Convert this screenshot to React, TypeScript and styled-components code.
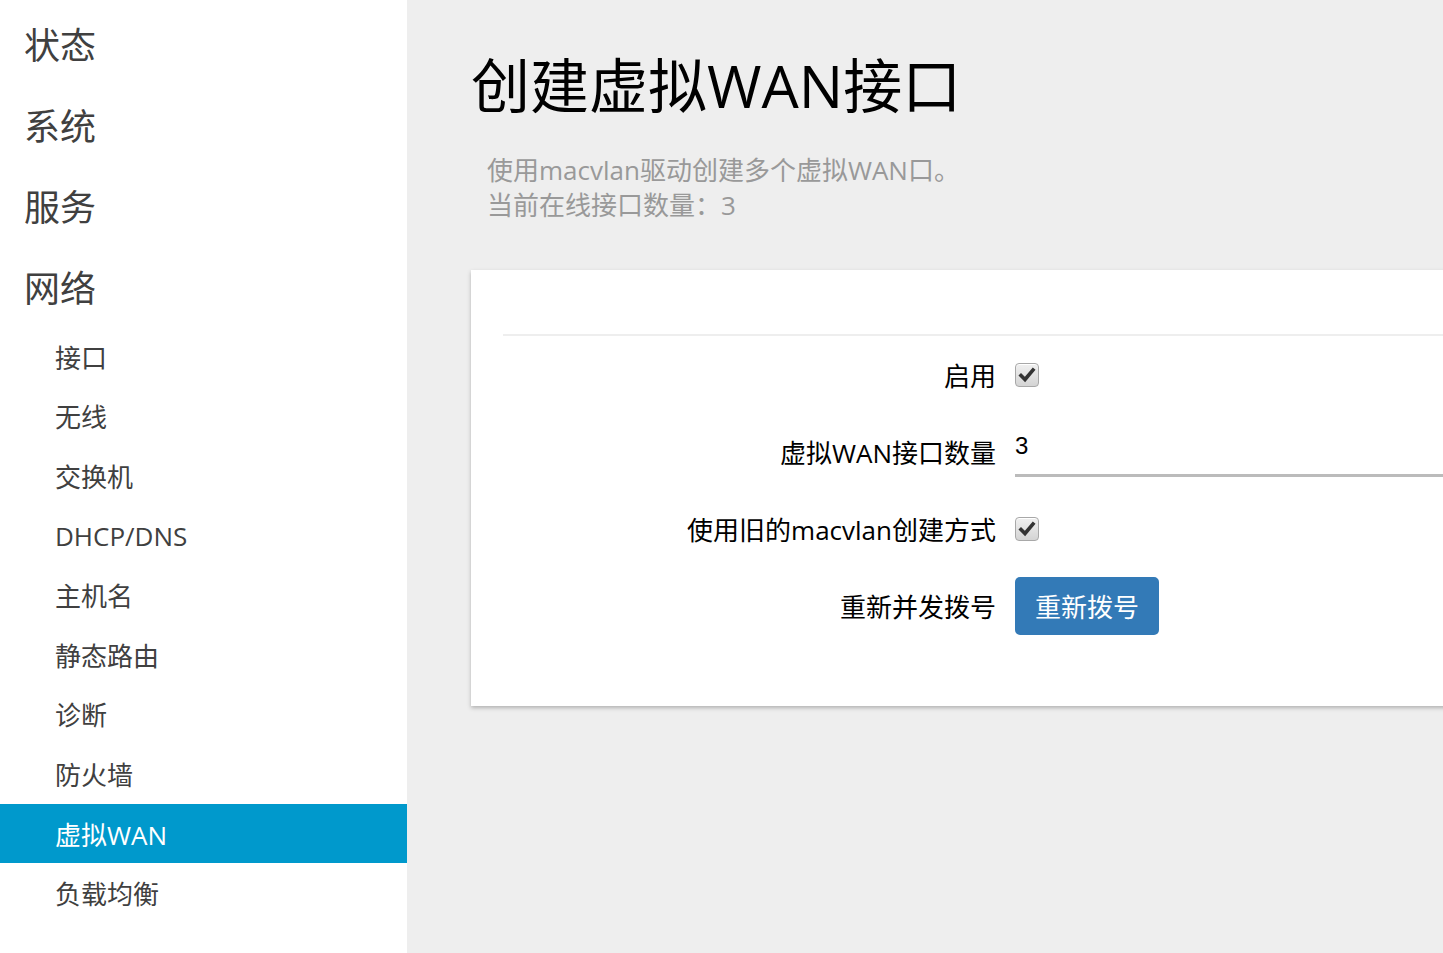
import React from 'react';
import styled, { createGlobalStyle } from 'styled-components';

const GlobalStyle = createGlobalStyle`
    html, body {
        margin:0;
        padding:0;
        height:100%;
        overflow:hidden;
        background:#eeeeee;
    }
    body {
        font-family:"Open Sans","Noto Sans CJK SC",sans-serif;
    }
    #root {
        height:100%;
    }
`;

const topMenu = ['状态', '系统', '服务', '网络'];
const subMenu = ['接口', '无线', '交换机', 'DHCP/DNS', '主机名', '静态路由', '诊断', '防火墙', '虚拟WAN', '负载均衡'];

const CheckBox = ({ checked = true }: { checked?: boolean }) => (
    <Box>
        {checked && (
            <svg width="18" height="18" viewBox="0 0 18 18">
                <path d="M3 9.5 L7 13.5 L15 4" fill="none" stroke="#333" strokeWidth="3.6" strokeLinecap="square" strokeLinejoin="miter" />
            </svg>
        )}
    </Box>
);

const App = () => {
    return (
        <Page>
            <GlobalStyle />
            <Sidebar>
                {topMenu.map((m) => (
                    <TopItem key={m}>{m}</TopItem>
                ))}
                <SubList>
                    {subMenu.map((m) => (
                        <SubItem key={m} active={m === '虚拟WAN'}>{m}</SubItem>
                    ))}
                </SubList>
            </Sidebar>
            <Main>
                <Title>创建虚拟WAN接口</Title>
                <Desc>
                    使用macvlan驱动创建多个虚拟WAN口。<br />
                    当前在线接口数量：3
                </Desc>
                <Card>
                    <Divider />
                    <FormRow>
                        <Label>启用</Label>
                        <Field><CheckBox /></Field>
                    </FormRow>
                    <FormRow>
                        <Label>虚拟WAN接口数量</Label>
                        <Field><TextInput defaultValue="3" /></Field>
                    </FormRow>
                    <FormRow>
                        <Label>使用旧的macvlan创建方式</Label>
                        <Field><CheckBox /></Field>
                    </FormRow>
                    <FormRow>
                        <Label>重新并发拨号</Label>
                        <Field><Button>重新拨号</Button></Field>
                    </FormRow>
                </Card>
            </Main>
        </Page>
    );
};

const Page = styled.div`
    display:flex;
    height:100%;
    overflow:hidden;
`;

const Sidebar = styled.div`
    width:407px;
    flex-shrink:0;
    background:#fff;
    padding-top:3px;
    box-sizing:border-box;
`;

const TopItem = styled.div`
    height:81px;
    display:flex;
    align-items:center;
    padding-left:24px;
    font-size:36px;
    color:#404040;
`;

const SubList = styled.div`
    display:flex;
    flex-direction:column;
`;

const SubItem = styled.div<{ active?: boolean }>`
    height:59.6px;
    display:flex;
    align-items:center;
    padding-left:55px;
    font-size:26px;
    color:${(p) => (p.active ? '#fff' : '#404040')};
    background:${(p) => (p.active ? '#0099cc' : 'transparent')};
`;

const Main = styled.div`
    flex:1;
    min-width:0;
    padding:50px 0 0 64px;
    box-sizing:border-box;
`;

const Title = styled.h1`
    margin:0;
    font-size:59px;
    font-weight:normal;
    line-height:70px;
    color:#000;
`;

const Desc = styled.div`
    margin:33px 0 0 16px;
    font-size:26px;
    line-height:35px;
    color:#999;
`;

const Card = styled.div`
    margin-top:47px;
    width:1100px;
    background:#fff;
    padding:64px 0 62px 32px;
    box-shadow:0 2px 4px rgba(0,0,0,0.25);
`;

const Divider = styled.div`
    height:2px;
    background:#eeeeee;
`;

const FormRow = styled.div`
    display:grid;
    grid-template-columns:493px 1fr;
    column-gap:19px;
    align-items:center;
    height:77px;
`;

const Label = styled.div`
    text-align:right;
    font-size:26px;
    color:#000;
`;

const Field = styled.div`
    display:flex;
    align-items:center;
`;

const Box = styled.span`
    width:22px;
    height:22px;
    border:1px solid #a8a8a8;
    border-radius:4px;
    background:linear-gradient(#f0f0f0,#d4d4d4);
    display:flex;
    align-items:center;
    justify-content:center;
    box-shadow:inset 0 1px 0 #fff;
`;

const TextInput = styled.input`
    width:100%;
    height:40px;
    border:none;
    border-bottom:3px solid #bbbbbb;
    outline:none;
    padding:0 0 8px 0;
    font-family:"Liberation Sans",Arial,sans-serif;
    font-size:24px;
    color:#000;
    background:transparent;
`;

const Button = styled.button`
    height:58px;
    padding:0 20px;
    border:none;
    border-radius:5px;
    background:#337ab7;
    color:#fff;
    font-family:"Open Sans","Noto Sans CJK SC",sans-serif;
    font-size:26px;
    cursor:pointer;
`;

export default App;
